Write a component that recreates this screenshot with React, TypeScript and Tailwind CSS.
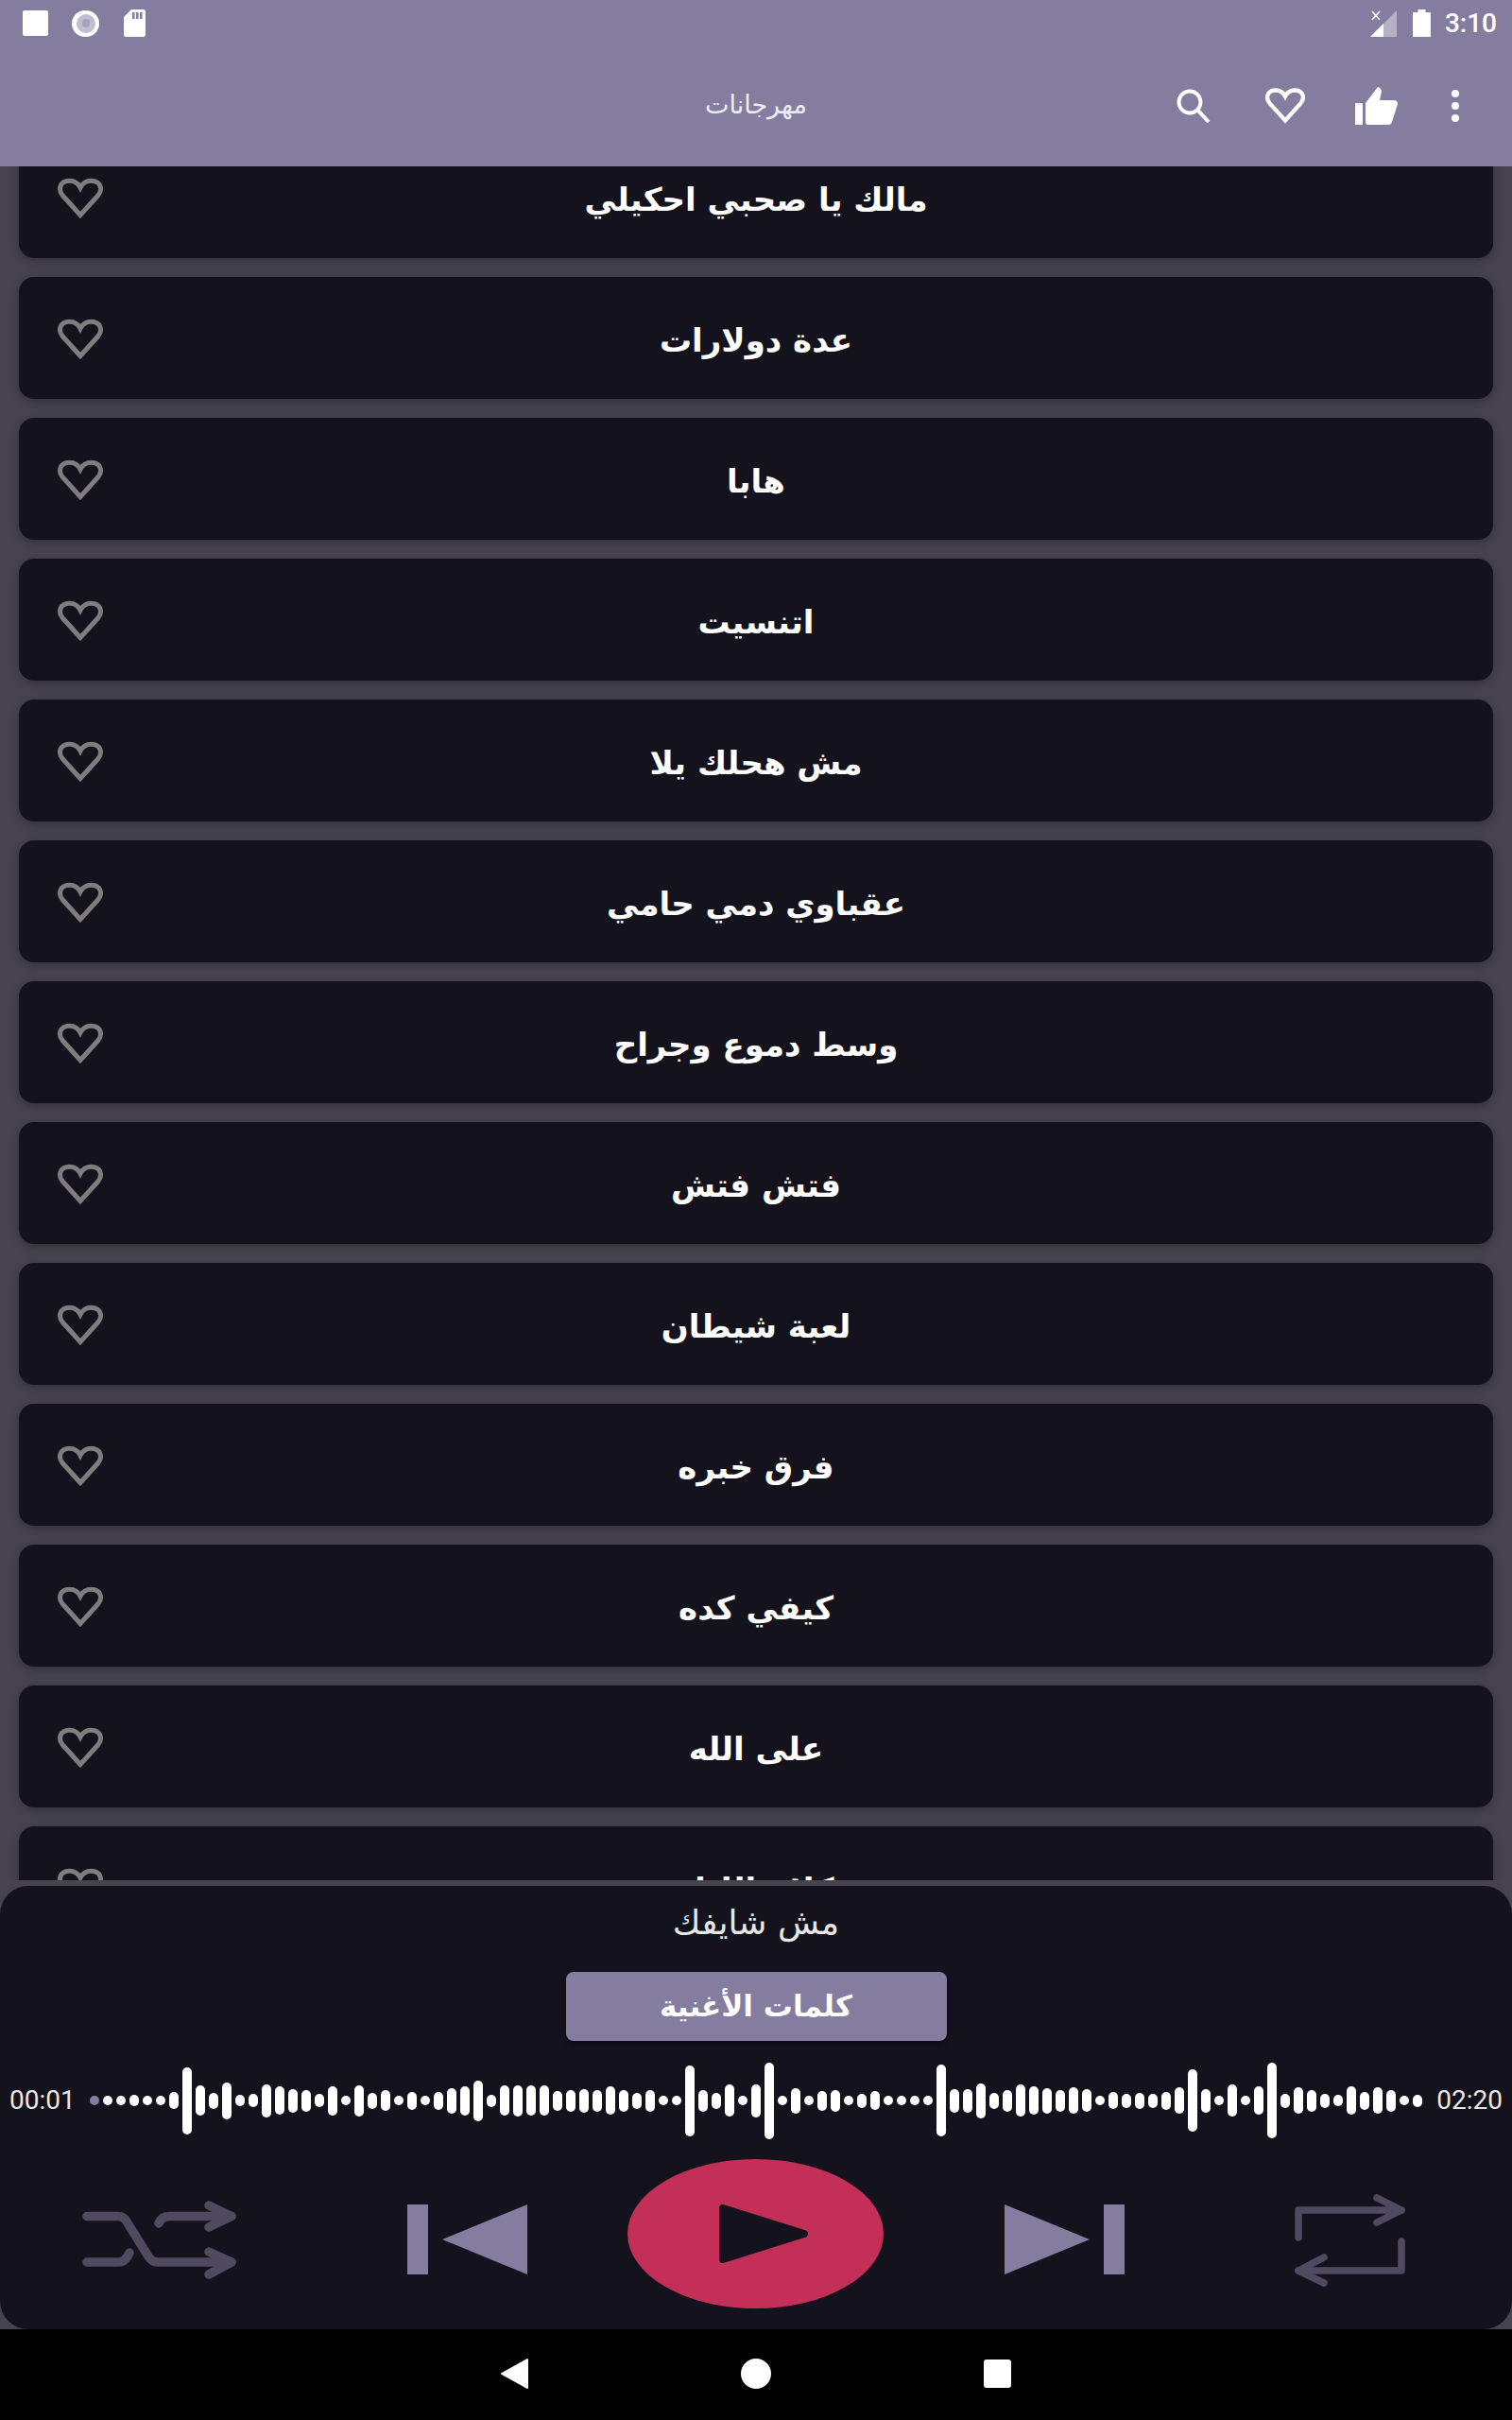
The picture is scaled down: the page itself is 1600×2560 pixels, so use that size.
const SONGS = [
  'مالك يا صحبي احكيلي',
  'عدة دولارات',
  'هابا',
  'اتنسيت',
  'مش هحلك يلا',
  'عقباوي دمي حامي',
  'وسط دموع وجراح',
  'فتش فتش',
  'لعبة شيطان',
  'فرق خبره',
  'كيفي كده',
  'على الله',
  'كلام الليل',
];

const WAVE = [
  10, 10, 10, 12, 10, 10, 18, 71, 32, 17, 39, 12, 14, 35, 30, 25, 23, 14, 31, 10, 33, 17,
  22, 10, 19, 10, 19, 27, 31, 43, 13, 32, 33, 32, 32, 21, 23, 25, 23, 30, 23, 17, 23, 10, 10, 75, 23, 17, 34, 10,
  35, 81, 10, 27, 10, 21, 23, 10, 15, 20, 10, 10, 10, 10, 76, 25, 25, 37, 17, 23, 34, 30, 27, 23, 28, 24, 10, 18, 15,
  17, 15, 19, 28, 66, 25, 10, 34, 10, 30, 80, 15, 28, 23, 15, 12, 30, 19, 28, 23, 10, 13,
];

function Heart({ className }: { className: string }) {
  return (
    <svg viewBox="0 0 50 43" className={className} fill="none" stroke="currentColor" strokeWidth="5" strokeLinejoin="miter">
      <path d="M25 39 L6.5 18.5 C0.5 11.5 4 2.7 13.5 2.7 C19 2.7 23 6 25 10 C27 6 31 2.7 36.5 2.7 C46 2.7 49.5 11.5 43.5 18.5 Z" />
    </svg>
  );
}

function StatusBar() {
  return (
    <div className="flex h-[48px] items-center pl-[24px] pr-[16px] pt-[1px] text-white">
      <div className="h-[27px] w-[27px] rounded-[2px] bg-white" />
      <div className="ml-[25px] flex h-[28px] w-[29px] items-center justify-center rounded-full bg-white">
        <div className="flex h-[20px] w-[20px] items-center justify-center rounded-full bg-[#c0bcd1]">
          <div className="h-[9px] w-[8px] rounded-full bg-[#a8a3bd]" />
        </div>
      </div>
      <svg viewBox="0 0 23 29" className="ml-[26px] h-[29px] w-[23px]">
        <path d="M8 0 H20.5 Q23 0 23 2.5 V26.5 Q23 29 20.5 29 H2.5 Q0 29 0 26.5 V8 Z" fill="#fff" />
        <path d="M9 3 h2.5 v7 H9 Z M13 3 h2.5 v7 H13 Z M17 3 h2.5 v7 H17 Z" fill="#847d9f" />
      </svg>
      <svg viewBox="0 0 28 28" className="ml-auto h-[28px] w-[28px]">
        <path d="M28 0 V28 H0 Z" fill="#fff" fillOpacity="0.4" />
        <path d="M14 14 V28 H0 Z" fill="#fff" />
        <path d="M2 1 L10 10 M10 1 L2 10" stroke="#fff" strokeWidth="1.6" />
      </svg>
      <svg viewBox="0 0 19 29" className="ml-[17px] h-[29px] w-[19px]">
        <path d="M5.5 0 H13.5 V3 H19 V29 H0 V3 H5.5 Z" fill="#fff" />
      </svg>
      <span className="ml-[15px] font-['Roboto',sans-serif] text-[28px] leading-none font-medium">3:10</span>
    </div>
  );
}

function Toolbar() {
  return (
    <div className="relative flex h-[128px] items-center pr-[56px] text-white">
      <span lang="ar" className="absolute inset-x-0 top-[43px] text-center font-['DejaVu_Sans',sans-serif] text-[27px] leading-[40px] text-white/85">
        مهرجانات
      </span>
      <div className="ml-auto flex items-center">
        <svg viewBox="0 0 36 36" className="h-[36px] w-[36px]" fill="none" stroke="currentColor" strokeWidth="4">
          <circle cx="14" cy="14" r="11.5" />
          <path d="M22 22 L34 35" />
        </svg>
        <Heart className="ml-[57px] h-[38px] w-[44px]" />
        <svg viewBox="0 0 45 40" className="ml-[52px] h-[40px] w-[45px]" fill="currentColor">
          <path d="M0 17 H8 V40 H0 Z" />
          <path d="M11 17 L24 0 Q28 1 28 5 L26 14 H41 Q45 14 45 18 L39 37 Q38 40 35 40 H14 Q11 40 11 37 Z" />
        </svg>
        <div className="ml-[57px] flex flex-col gap-[5px]">
          <div className="h-[8px] w-[8px] rounded-full bg-white" />
          <div className="h-[8px] w-[8px] rounded-full bg-white" />
          <div className="h-[8px] w-[8px] rounded-full bg-white" />
        </div>
      </div>
    </div>
  );
}

function SongCard({ title }: { title: string }) {
  return (
    <div className="grid h-[129px] grid-cols-[1fr_auto_1fr] items-center rounded-[16px] bg-[#14121d] shadow-[0_3px_10px_rgba(0,0,0,0.28)]">
      <Heart className="mt-[2px] ml-[40px] h-[44px] w-[50px] text-[#807d7e]" />
      <span lang="ar" className="pt-[5px] font-['DejaVu_Sans',sans-serif] text-[34px] leading-[50px] font-bold text-white">
        {title}
      </span>
    </div>
  );
}

function Waveform() {
  return (
    <div className="flex h-[90px] items-center px-[10px] font-['Roboto',sans-serif] text-[28px] text-white/90">
      <span className="w-[85px]">00:01</span>
      <div className="flex items-center gap-[4px]">
        {WAVE.map((h, i) => (
          <div
            key={i}
            className={i === 0 ? 'w-[10px] rounded-full bg-[#847d9f]' : 'w-[10px] rounded-full bg-white'}
            style={{ height: h }}
          />
        ))}
      </div>
      <span className="ml-auto">02:20</span>
    </div>
  );
}

function Controls() {
  return (
    <div className="flex items-center pl-[87px] text-[#847d9f]">
      <svg viewBox="0 0 163 83" className="h-[83px] w-[163px] text-[#4f4a60]" fill="none" stroke="currentColor" strokeWidth="9.5" strokeLinecap="round" strokeLinejoin="round">
        <path d="M5 16.5 H38 Q44 16.5 47 22 L70 59 Q74 65 80 65 H158" />
        <path d="M81 24 Q84 16.5 92 16.5 H158" />
        <path d="M5 65 H38 Q46 65 50 55" />
        <path d="M134 5 L158 16.5 L134 28" />
        <path d="M134 54 L158 65 L134 78" />
      </svg>
      <svg viewBox="0 0 127 74" className="ml-[181px] h-[74px] w-[127px]" fill="currentColor">
        <path d="M0 0 H22 V74 H0 Z" />
        <path d="M127 0 V74 L37 37 Z" />
      </svg>
      <div className="mb-[12px] ml-[106px] flex h-[158px] w-[271px] items-center justify-center rounded-[50%] bg-[#c32f57]">
        <svg viewBox="0 0 94 62" className="ml-[17px] h-[62px] w-[94px] text-[#14121d]" fill="currentColor" stroke="currentColor" strokeWidth="8" strokeLinejoin="round">
          <path d="M4 4 L90 31 L4 58 Z" />
        </svg>
      </div>
      <svg viewBox="0 0 127 74" className="ml-[128px] h-[74px] w-[127px]" fill="currentColor">
        <path d="M0 0 V74 L90 37 Z" />
        <path d="M105 0 H127 V74 H105 Z" />
      </svg>
      <svg viewBox="0 0 119 101" className="ml-[179px] h-[101px] w-[119px] text-[#4f4a60]" fill="none" stroke="currentColor" strokeWidth="7.5" strokeLinecap="round" strokeLinejoin="round">
        <path d="M5 48 V19 H114" />
        <path d="M88 6 L114 19 L88 32" />
        <path d="M114 52 V83 H5" />
        <path d="M32 69 L5 83 L32 96" />
      </svg>
    </div>
  );
}

function NavBar() {
  return (
    <div className="flex h-[96px] items-center bg-black pb-[2px] pl-[530px]">
      <svg viewBox="0 0 29 32" className="h-[32px] w-[29px]" fill="#fff" stroke="#fff" strokeWidth="2" strokeLinejoin="round">
        <path d="M28 1 V31 L1 16 Z" />
      </svg>
      <div className="ml-[225px] h-[32px] w-[32px] rounded-full bg-white" />
      <div className="ml-[225px] h-[30px] w-[29px] rounded-[3px] bg-white" />
    </div>
  );
}

export default function App() {
  return (
    <div className="flex h-[2560px] w-[1600px] flex-col overflow-hidden bg-[#46434e]">
      <header className="relative z-10 h-[176px] shrink-0 bg-[#847d9f]">
        <StatusBar />
        <Toolbar />
      </header>

      <main className="h-[1813px] shrink-0 overflow-hidden px-[20px]">
        <div className="-mt-[32px] flex flex-col gap-[20px]">
          {SONGS.map((s) => (
            <SongCard key={s} title={s} />
          ))}
        </div>
      </main>

      <section className="mt-[6px] flex h-[469px] shrink-0 flex-col rounded-[30px] bg-[#14121d]">
        <div lang="ar" className="mt-[14px] h-[50px] text-center font-['DejaVu_Sans',sans-serif] text-[36px] leading-[50px] text-white/90">
          مش شايفك
        </div>
        <button lang="ar" className="mx-auto mt-[27px] block h-[73px] w-[403px] rounded-[8px] bg-[#847d9f] font-['DejaVu_Sans',sans-serif] text-[31px] font-semibold text-white shadow-[0_3px_6px_rgba(0,0,0,0.4)]">
          كلمات الأغنية
        </button>
        <div className="mt-[18px]">
          <Waveform />
        </div>
        <div className="mt-[17px]">
          <Controls />
        </div>
      </section>

      <NavBar />
    </div>
  );
}
